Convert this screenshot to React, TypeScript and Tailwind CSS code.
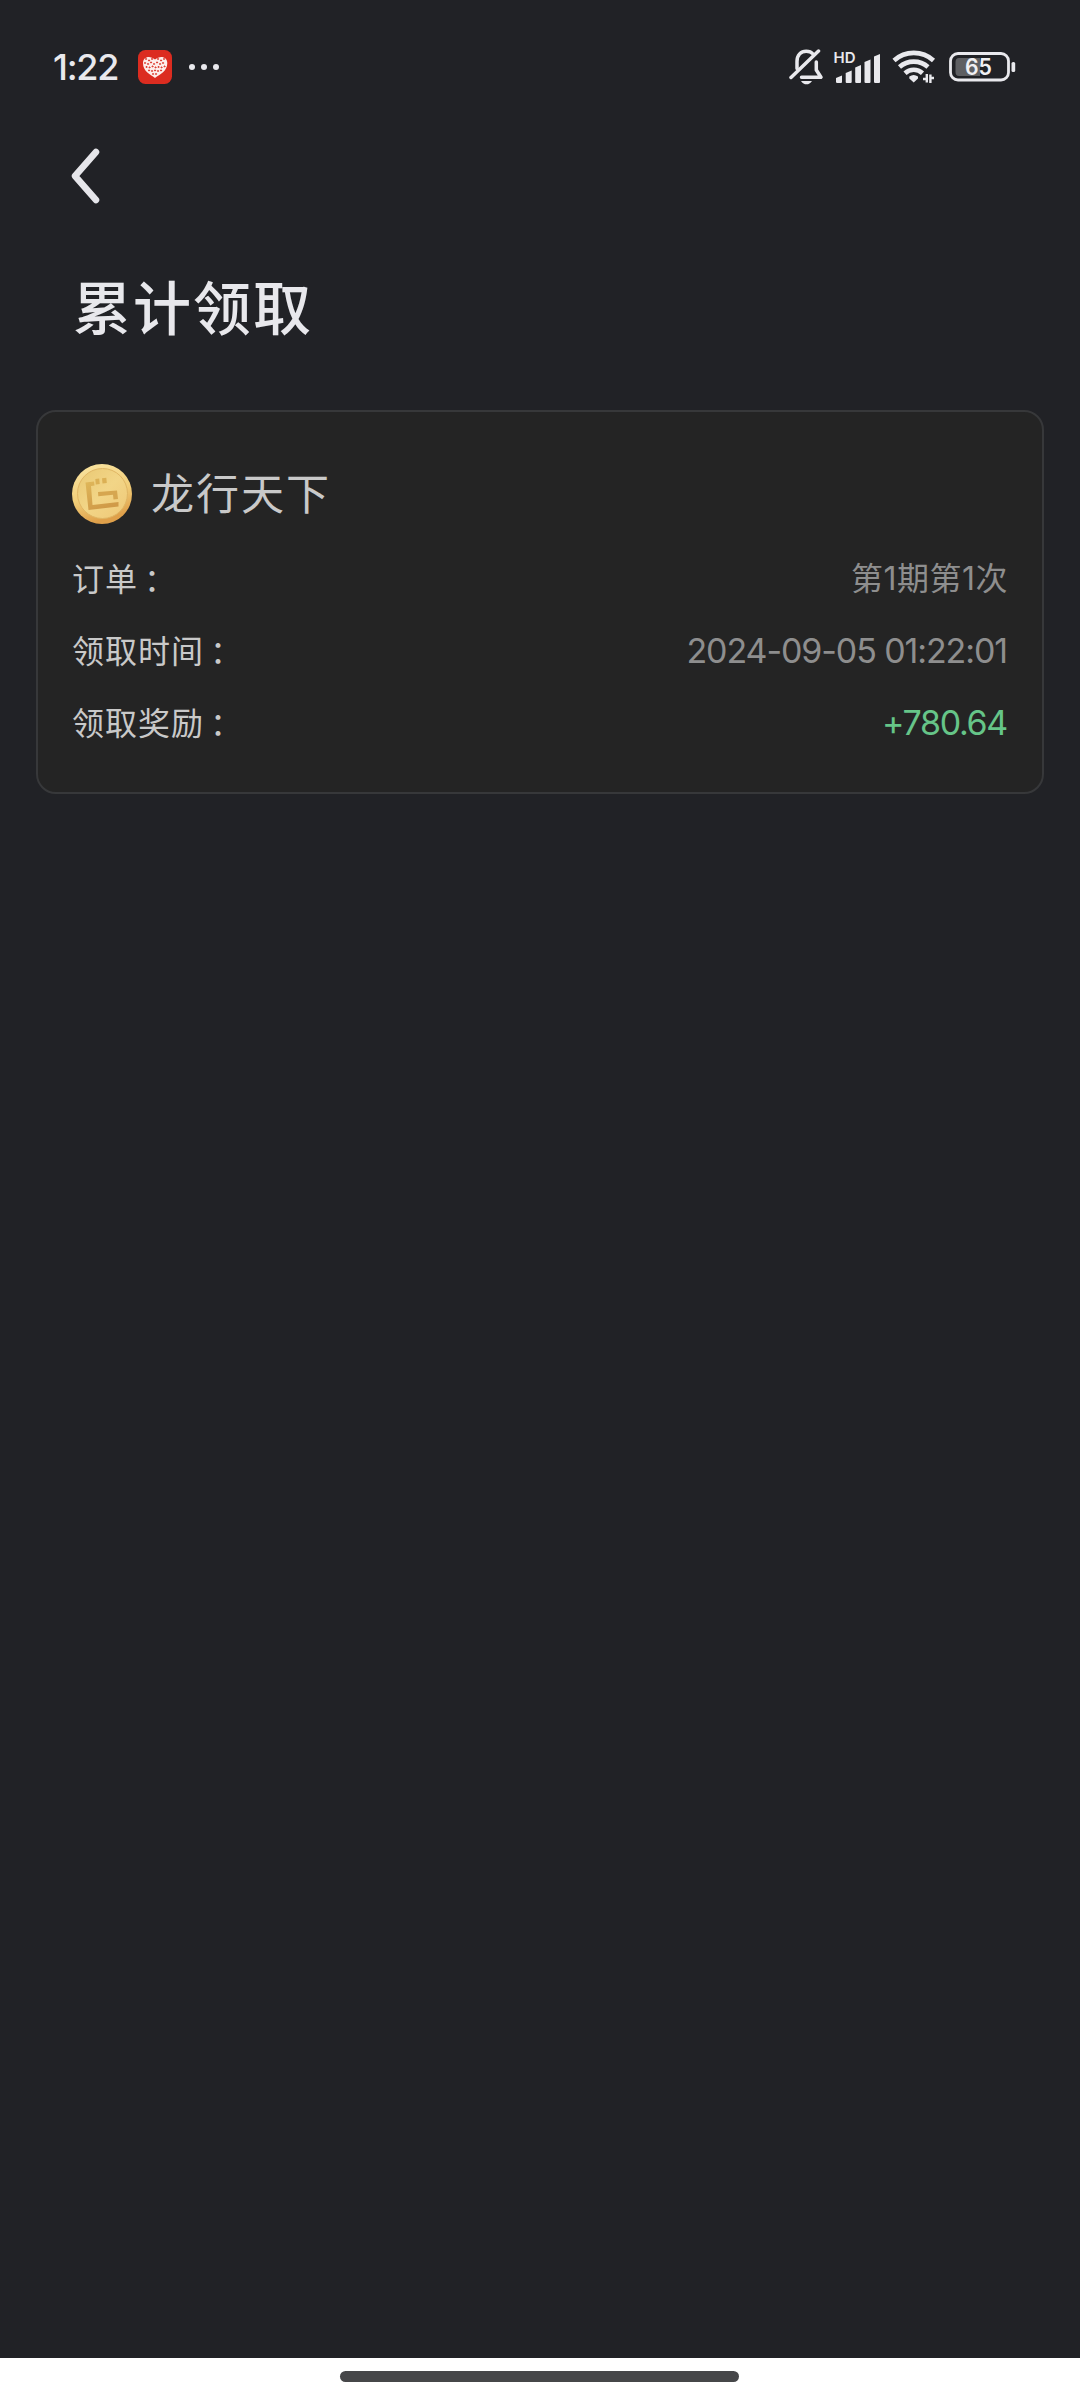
import type { ReactNode } from 'react'

interface DetailRowProps {
  label: string
  children: ReactNode
}

// cut-outs of the mosaic heart, [x, y] in a 34px badge
const heartGaps = [
  [8, 9], [11, 10.5], [14, 9], [20, 9], [23, 10.5], [26, 9],
  [7, 13], [10, 14], [13, 12.5], [16, 14], [19, 12.5], [22, 14], [25, 13],
  [8.5, 17], [11.5, 17.5], [14.5, 16.5], [17.5, 17.5], [20.5, 17], [23.5, 17.5], [26.5, 16.5],
  [11, 20.5], [14, 21], [17, 20.5], [20, 21], [23, 20.5], [15, 24], [18, 24],
]

function AppBadge() {
  return (
    <svg className="h-[34px] w-[34px]" viewBox="0 0 34 34">
      <rect width="34" height="34" rx="7.5" fill="#dc2c20" />
      <path d="M17 28C12 24 5 21.500 5 13C5 6.500 12 5 17 9.500C22 5 29.300 6.500 29.300 13C29.300 21.500 22 24 17 28Z" fill="#fdeeeb" />
      {heartGaps.map(([x, y]) => (
        <path key={`${x}-${y}`} d={`M${x - 0.9} ${y}h2M${x} ${y - 1}v1.800`} stroke="#dc4034" strokeWidth="1" />
      ))}
    </svg>
  )
}

function MutedBell() {
  return (
    <svg className="h-[38px] w-[35px]" viewBox="0 0 35 38" fill="none" stroke="#e9e9ed" strokeLinecap="round" strokeLinejoin="round">
      <path d="M8 20.500V13.500C8 7 12 3.200 17.200 3.200C20 3.200 22.500 4.200 24 6" strokeWidth="3.500" />
      <path d="M27.300 14V22L32 29.300H12.500" strokeWidth="3.500" />
      <path d="M2 29.500L29.500 3" strokeWidth="3.500" />
      <path d="M12 33H23C21.500 35.600 19.500 36.300 17.500 36.300S13.300 35.600 12 33Z" fill="#e9e9ed" stroke="none" />
    </svg>
  )
}

function Signal() {
  return (
    <svg className="h-[45px] w-[48px]" viewBox="0 -6 48 45" fill="#e9e9ed">
      <text x="0.5" y="12.200" fontSize="14.500" fontWeight="600" fontFamily="Inter, sans-serif" textLength="22" lengthAdjust="spacingAndGlyphs">
        HD
      </text>
      <path d="M3 27L9 24.500V31Q9 32 8 32H4.200Q3 32 3 31Z" />
      <path d="M12.700 22L18.700 19.500V31Q18.700 32 17.700 32H13.700Q12.700 32 12.700 31Z" />
      <path d="M22.200 16.500L28 14V31Q28 32 27 32H23.400Q22.200 32 22.200 31Z" />
      <path d="M31.500 11L37.500 8.500V31Q37.500 32 36.500 32H32.700Q31.500 32 31.500 31Z" />
      <path d="M41 5.500L47 3V31Q47 32 46 32H42.200Q41 32 41 31Z" />
    </svg>
  )
}

function Wifi() {
  return (
    <svg className="h-[34px] w-[44px]" viewBox="0 0 44 34" fill="none" stroke="#e9e9ed" strokeWidth="4.600">
      <path d="M2 10.500A29.500 29.500 0 0 1 41.500 10.500" />
      <path d="M7.500 17A21.500 21.500 0 0 1 36 17" />
      <path d="M13 23.200A13 13 0 0 1 30.500 23.200" />
      <path d="M17.300 26.500Q21.700 23.400 26 26.500V28.500L21.700 32.500L17.300 28.500Z" fill="#e9e9ed" stroke="none" />
      <path d="M34.800 24V32.500M31 29H34.800M38.400 33V24.500M38.400 28H42" strokeWidth="2.400" />
    </svg>
  )
}

function Battery() {
  return (
    <svg className="h-[30px] w-[68px]" viewBox="0 0 68 30">
      <rect x="1.500" y="1.500" width="58" height="26.500" rx="7.500" fill="none" stroke="#e9e9ed" strokeWidth="2.800" />
      <path d="M10 6H31V24H10Q6.500 24 6.500 20V10Q6.500 6 10 6Z" fill="#5e5f62" />
      <rect x="62.500" y="10" width="3.700" height="10" rx="1.600" fill="#e9e9ed" />
      <text x="16" y="23" fontSize="22.500" fontWeight="600" fontFamily="Inter, sans-serif" fill="#f0f0f3" textLength="27" lengthAdjust="spacingAndGlyphs">
        65
      </text>
    </svg>
  )
}

function Coin() {
  return (
    <svg className="mt-px h-[60px] w-[60px]" viewBox="0 0 60 60">
      <defs>
        <linearGradient id="rim" x1="0" y1="0" x2="0.3" y2="1">
          <stop offset="0" stopColor="#fae6a4" />
          <stop offset="0.6" stopColor="#f1cd78" />
          <stop offset="1" stopColor="#dfa04a" />
        </linearGradient>
        <linearGradient id="face" x1="0" y1="0" x2="1" y2="1">
          <stop offset="0" stopColor="#e9c873" />
          <stop offset="0.5" stopColor="#f2d587" />
          <stop offset="1" stopColor="#efc877" />
        </linearGradient>
        <linearGradient id="mark" x1="0" y1="0" x2="0.4" y2="1">
          <stop offset="0" stopColor="#dfb75a" />
          <stop offset="1" stopColor="#d09a48" />
        </linearGradient>
      </defs>
      <circle cx="30" cy="30" r="30" fill="url(#rim)" />
      <circle cx="30.500" cy="29.500" r="25" fill="url(#face)" stroke="#e0b664" strokeWidth="1" />
      <path d="M13.500 18.500L22 17.500L22.500 21.500L19 22L20.500 41L46.500 38V42.500L16.500 46Z" fill="url(#mark)" />
      <path d="M23.300 15L27.200 14.500L27.700 20L23.800 20.500ZM30 14.200L34.300 13.700L34.800 19L30.500 19.500Z" fill="#dbb055" />
      <path d="M26 28L45 26.500L46 35L41.500 35.500L41 30.800L26.300 32.300Z" fill="#d6a650" />
    </svg>
  )
}

function DetailRow({ label, children }: DetailRowProps) {
  return (
    <div className="flex h-[72px] items-center justify-between">
      <span className="flex pb-[3px] text-[32px] tracking-[1px] text-[#c9c9c9]">
        {label}
        <span className="ml-1.5">：</span>
      </span>
      {children}
    </div>
  )
}

export default function App() {
  return (
    <div lang="zh-CN" className="flex h-[2400px] w-[1080px] flex-col bg-[#212226] font-['Noto_Sans_CJK_SC',sans-serif]">
      <header className="flex h-[134px] items-center justify-between pr-[63px] pl-[53px]">
        <div className="flex items-center">
          <span className="w-[85px] font-[Inter,sans-serif] text-[36px] font-medium tracking-[-1.3px] text-[#e9e9ed]">1:22</span>
          <AppBadge />
          <div className="ml-[17px] flex gap-1.5">
            <span className="size-1.5 rounded-full bg-[#e9e9ed]" />
            <span className="size-1.5 rounded-full bg-[#e9e9ed]" />
            <span className="size-1.5 rounded-full bg-[#e9e9ed]" />
          </div>
        </div>
        <div className="flex items-center">
          <MutedBell />
          <div className="ml-[9px]">
            <Signal />
          </div>
          <div className="ml-[11px]">
            <Wifi />
          </div>
          <div className="ml-[13px]">
            <Battery />
          </div>
        </div>
      </header>

      <nav className="h-[84px] pt-[14px] pl-[70px]">
        <svg className="h-14 w-8" viewBox="0 0 32 56" fill="none" stroke="#e6e6ea" strokeWidth="6.500" strokeLinecap="round" strokeLinejoin="round">
          <path d="M26 4L5 28L26 52" />
        </svg>
      </nav>

      <h1 className="mt-[42px] pl-[73px] text-[58px] leading-[90px] font-medium tracking-[2px] text-[#e8e8ec]">累计领取</h1>

      <main className="mx-9 mt-[60px] h-[384px] rounded-[20px] border-2 border-[#37383a] bg-[#242424] px-[34px] pt-[50px]">
        <div className="flex h-[62px] items-center">
          <Coin />
          <h2 className="ml-[19px] pb-1 text-[43px] leading-[60px] tracking-[2px] text-[#c9c9c9]">龙行天下</h2>
        </div>
        <div className="mt-[18px]">
          <DetailRow label="订单">
            <span className="pt-[2px] font-[Inter,'Noto_Sans_CJK_SC',sans-serif] text-[32px] tracking-[0.5px] text-[#8e8e8e]">第1期第1次</span>
          </DetailRow>
          <DetailRow label="领取时间">
            <span className="mr-px font-[Inter,sans-serif] text-[34px] tracking-[-1.1px] text-[#8e8e8e]">2024-09-05 01:22:01</span>
          </DetailRow>
          <DetailRow label="领取奖励">
            <span className="mr-px font-[Inter,sans-serif] text-[34px] tracking-[-1.3px] text-[#66c588]">+780.64</span>
          </DetailRow>
        </div>
      </main>

      <footer className="mt-auto flex h-[42px] justify-center bg-white pt-[13px] pr-px">
        <div className="h-[11px] w-[399px] rounded-full bg-[#464749]" />
      </footer>
    </div>
  )
}
